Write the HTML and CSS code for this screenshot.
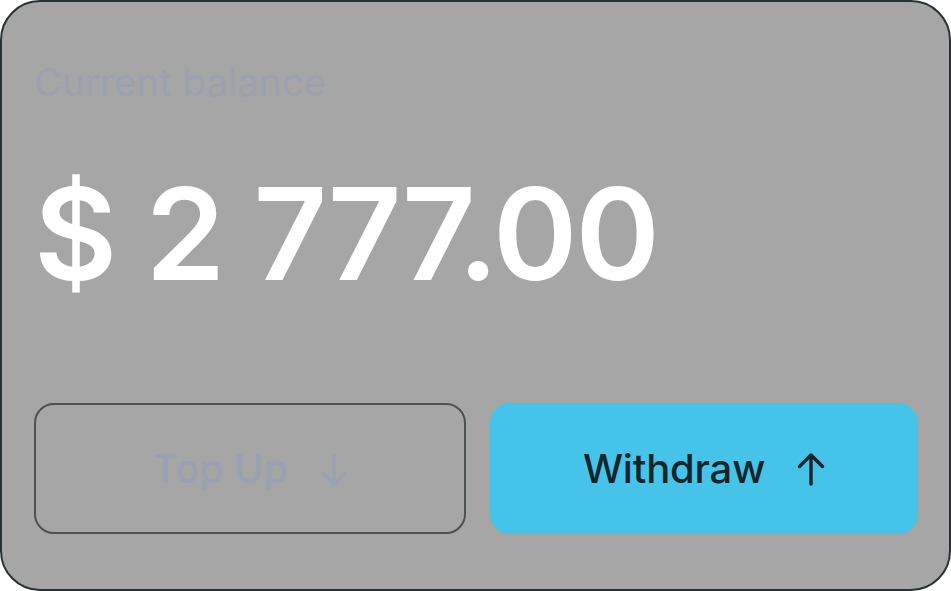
FILE: index.html
```html
<!DOCTYPE html>
<html lang="en">
<head>
<meta charset="utf-8">
<title>Balance</title>
<link rel="stylesheet" href="styles.css">
</head>
<body>
<div class="card">
  <div class="label">Current balance</div>
  <div class="amount">$ 2 777.00</div>
  <div class="actions">
    <button class="btn btn-outline">
      <span>Top Up</span>
      <svg class="icon" viewBox="0 0 28 34" width="28" height="34" fill="none" stroke="currentColor" stroke-width="3.4" stroke-linecap="round" stroke-linejoin="round"><path d="M14 3v29M2.5 20.5 14 32l11.5-11.5"/></svg>
    </button>
    <button class="btn btn-primary">
      <span>Withdraw</span>
      <svg class="icon" viewBox="0 0 28 34" width="28" height="34" fill="none" stroke="currentColor" stroke-width="3.4" stroke-linecap="round" stroke-linejoin="round"><path d="M14 32V3M2.5 14.5 14 3l11.5 11.5"/></svg>
    </button>
  </div>
</div>
</body>
</html>
```
FILE: styles.css
```css
* { box-sizing: border-box; }
html, body { margin: 0; padding: 0; background: #ffffff; }
body { font-family: Inter, "Noto Sans", sans-serif; }
.card {
  width: 951px;
  height: 591px;
  background: #a6a6a6;
  border: 2px solid #283235;
  border-radius: 40px;
  padding: 52px 31px 55px 32px;
  display: flex;
  flex-direction: column;
}
.label {
  font-size: 38.5px;
  line-height: 56px;
  color: #9aa1b0;
  opacity: 0.8;
}
.amount {
  font-size: 128px;
  line-height: 160px;
  font-weight: 560;
  color: #ffffff;
  margin-top: 44px;
  letter-spacing: -2px;
}
.actions {
  margin-top: auto;
  display: flex;
  gap: 24px;
}
.btn {
  flex: 1;
  height: 131px;
  border-radius: 20px;
  display: flex;
  align-items: center;
  justify-content: center;
  gap: 32px;
  font-family: Inter, "Noto Sans", sans-serif;
  font-size: 40px;
  font-weight: 450;
  letter-spacing: -0.2px;
  cursor: pointer;
}
.btn-outline {
  background: transparent;
  border: 2px solid #4c5154;
  color: #9aa1b0;
}
.btn-primary {
  background: #46c3e9;
  border: none;
  color: #13252b;
}
.icon { display: block; }
```
